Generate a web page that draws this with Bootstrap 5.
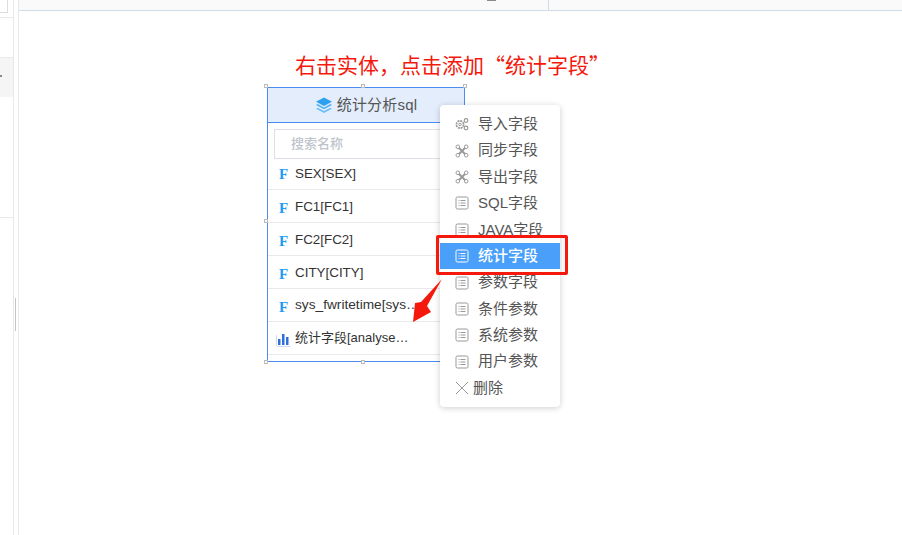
<!DOCTYPE html>
<html lang="zh-CN">
<head>
  <meta charset="UTF-8">
  <title>统计字段</title>
  <link href="https://cdn.jsdelivr.net/npm/bootstrap@5.3.0/dist/css/bootstrap.min.css" rel="stylesheet">
  <style>
    html, body { height: 100%; overflow: hidden; }
    body { font-family: "Liberation Sans", "Noto Sans CJK SC", sans-serif; font-size: 14px; color: #333; background: #fff; }
    .shell { height: 535px; }
    .side-pane { width: 14px; border-right: 1px solid #e8e8ec; position: relative; }
    .side-top { height: 18px; border-bottom: 1px solid #e8e8ec; }
    .side-top-box { height: 13px; width: 8px; background: #fff; border: 1px solid #ddd; border-width: 0 1px 1px 0; }
    .side-band { height: 40px; margin-top: 39px; background: #f5f5f5; border-top: 1px solid #ebebef; }
    .side-tick { position: absolute; left: 0; top: 75px; width: 2px; height: 2px; background: #888; }
    .side-line { height: 1px; background: #e8e8ec; margin-top: 120px; }
    .split-pane { width: 5px; border-right: 1px solid #e8e8ec; position: relative; }
    .split-grip { position: absolute; left: 1px; top: 298px; width: 1px; height: 33px; background: #c4c4c4; }
    .work-top { height: 11px; background: #fafafa; border-bottom: 1px solid #cfdbe6; position: relative; }
    .work-tab { width: 530px; border-right: 1px solid #cfdbe6; }
    .work-mark { position: absolute; left: 468px; top: 0; width: 9px; height: 1px; background: #8a8a8a; }
    .note-text { position: absolute; left: 295px; top: 50px; font-family: "Noto Sans CJK SC", sans-serif; font-size: 21px; font-weight: 400; line-height: 28px; color: #f5180c; white-space: nowrap; }
    .entity { position: absolute; left: 267px; top: 87px; width: 198px; height: 275px; border: 1px solid #4a8cf0; background: #fff; }
    .entity-head { height: 35px; background: #e3edfc; border-bottom: 1px solid #4a8cf0; font-size: 15px; color: #555; padding-top: 1px; letter-spacing: .2px; }
    .entity-search { margin: 6px 0 0 6px; height: 30px; width: 190px; border: 1px solid #dcdfe6; padding-left: 16px; color: #c0c4cc; font-size: 13px; line-height: 28px; font-weight: 500; }
    .field-row { height: 33px; border-bottom: 1px solid #e9e9ec; position: relative; padding-left: 27px; font-size: 13.4px; line-height: 34px; white-space: nowrap; color: #333; }
    .field-row.first-row { height: 31px; line-height: 29px; }
    .field-row.wide-row { font-size: 13.7px; line-height: 32px; }
    .field-row.cn-row { font-size: 13px; line-height: 32px; }
    .field-f { position: absolute; left: 11px; top: 10px; font-family: "Liberation Serif", serif; font-weight: 700; font-size: 15px; line-height: 16px; color: #1f9bf5; }
    .first-row .field-f { top: 7px; }
    .field-chart { position: absolute; left: 8px; top: 10px; }
    .grab { position: absolute; width: 4px; height: 4px; background: #fff; border: 1px solid #bbb; }
    .ctx-menu { position: absolute; left: 440px; top: 105px; width: 120px; height: 302px; background: #fff; border-radius: 4px; box-shadow: 0 1px 6px rgba(0, 0, 0, .2); padding-top: 6px; }
    .ctx-item { height: 26.4px; display: flex; align-items: center; padding-left: 15px; gap: 9px; color: #555; font-size: 15px; white-space: nowrap; }
    .ctx-item svg { flex: none; color: #999; }
    .ctx-item.ctx-on { background: #4a9ffb; color: #fff; font-weight: 500; }
    .ctx-item.ctx-on svg { color: #fff; }
    .ctx-item.ctx-del { gap: 4px; }
    .red-frame { position: absolute; left: 436px; top: 235px; width: 132px; height: 40px; border: 3px solid #f5180c; border-radius: 2px; }
    .red-arrow { position: absolute; left: 408px; top: 276px; }
  </style>
</head>
<body>
  <svg width="0" height="0" class="position-absolute">
    <defs>
      <symbol id="ico-list" viewBox="0 0 14 14">
        <rect x="1" y="1" width="12" height="12" rx="1.5" fill="none" stroke="currentColor"/>
        <path d="M3.5 4.5h1M3.5 7h1M3.5 9.5h1M5.5 4.5h5M5.5 7h5M5.5 9.5h5" stroke="currentColor" fill="none"/>
      </symbol>
      <symbol id="ico-tools" viewBox="0 0 14 14">
        <path d="M3 3l8.5 8.5M11 3L2.5 11.5" stroke="currentColor" stroke-width="2" fill="none"/>
        <circle cx="2.8" cy="2.8" r="1.8" fill="#fff" stroke="currentColor"/>
        <circle cx="11.2" cy="2.8" r="1.8" fill="#fff" stroke="currentColor"/>
        <circle cx="2.8" cy="11.2" r="1.8" fill="#fff" stroke="currentColor"/>
        <circle cx="11.2" cy="11.2" r="1.8" fill="#fff" stroke="currentColor"/>
      </symbol>
      <symbol id="ico-gears" viewBox="0 0 14 14">
        <circle cx="5" cy="7.5" r="3.6" fill="none" stroke="currentColor" stroke-width="1.8" stroke-dasharray="2 .8"/>
        <circle cx="5" cy="7.5" r="1.2" fill="none" stroke="currentColor"/>
        <circle cx="11" cy="3.5" r="1.8" fill="none" stroke="currentColor" stroke-width="1.2"/>
        <circle cx="11" cy="11" r="1.8" fill="none" stroke="currentColor" stroke-width="1.2"/>
      </symbol>
    </defs>
  </svg>

  <div class="shell d-flex">
    <div class="side-pane flex-shrink-0">
      <div class="side-top"><div class="side-top-box"></div></div>
      <div class="side-band"></div>
      <div class="side-tick"></div>
      <div class="side-line"></div>
    </div>
    <div class="split-pane flex-shrink-0"><div class="split-grip"></div></div>
    <div class="flex-grow-1">
      <div class="work-top d-flex"><div class="work-tab"></div><div class="work-mark"></div></div>
    </div>
  </div>

  <div class="note-text">右击实体，点击添加“统计字段”</div>

  <div class="entity">
    <div class="entity-head d-flex align-items-center justify-content-center gap-1">
      <svg width="18" height="18" viewBox="0 0 17 17">
        <path d="M8.5 0.5l7.5 4-7.5 4-7.5-4z" fill="#2ba0f0"/>
        <path d="M1 7.5l1.6-.8 5.9 3.1 5.9-3.1 1.6.8-7.5 4z" fill="#4db1f4"/>
        <path d="M1 11l1.6-.8 5.9 3.1 5.9-3.1 1.6.8-7.5 4z" fill="#6cc0f6"/>
      </svg>
      <span>统计分析sql</span>
    </div>
    <div class="entity-search">搜索名称</div>
    <div class="field-row first-row"><span class="field-f">F</span>SEX[SEX]</div>
    <div class="field-row"><span class="field-f">F</span>FC1[FC1]</div>
    <div class="field-row"><span class="field-f">F</span>FC2[FC2]</div>
    <div class="field-row"><span class="field-f">F</span>CITY[CITY]</div>
    <div class="field-row wide-row"><span class="field-f">F</span>sys_fwritetime[sys…</div>
    <div class="field-row cn-row">
      <svg class="field-chart" width="15" height="15" viewBox="0 0 15 15">
        <path d="M.5 3v9.5a2 2 0 0 0 2 2h12" fill="none" stroke="#c9dcf7"/>
        <path d="M2 7h2.5v6H2zM6 2h2.5v11H6zM10 5h2.5v8H10z" fill="#2f6fdc"/>
      </svg>
      统计字段[analyse…
    </div>
  </div>

  <span class="grab" style="left:264px;top:84px"></span>
  <span class="grab" style="left:361px;top:84px"></span>
  <span class="grab" style="left:463px;top:84px"></span>
  <span class="grab" style="left:264px;top:219px"></span>
  <span class="grab" style="left:264px;top:360px"></span>
  <span class="grab" style="left:361px;top:360px"></span>
  <span class="grab" style="left:463px;top:360px"></span>

  <div class="ctx-menu">
    <div class="ctx-item"><svg width="14" height="14"><use href="#ico-gears"/></svg><span>导入字段</span></div>
    <div class="ctx-item"><svg width="14" height="14"><use href="#ico-tools"/></svg><span>同步字段</span></div>
    <div class="ctx-item"><svg width="14" height="14"><use href="#ico-tools"/></svg><span>导出字段</span></div>
    <div class="ctx-item"><svg width="14" height="14"><use href="#ico-list"/></svg><span>SQL字段</span></div>
    <div class="ctx-item"><svg width="14" height="14"><use href="#ico-list"/></svg><span>JAVA字段</span></div>
    <div class="ctx-item ctx-on"><svg width="14" height="14"><use href="#ico-list"/></svg><span>统计字段</span></div>
    <div class="ctx-item"><svg width="14" height="14"><use href="#ico-list"/></svg><span>参数字段</span></div>
    <div class="ctx-item"><svg width="14" height="14"><use href="#ico-list"/></svg><span>条件参数</span></div>
    <div class="ctx-item"><svg width="14" height="14"><use href="#ico-list"/></svg><span>系统参数</span></div>
    <div class="ctx-item"><svg width="14" height="14"><use href="#ico-list"/></svg><span>用户参数</span></div>
    <div class="ctx-item ctx-del">
      <svg width="14" height="14" viewBox="0 0 14 14"><path d="M1 1l12 12M13 1L1 13" stroke="currentColor" fill="none"/></svg>
      <span>删除</span>
    </div>
  </div>

  <div class="red-frame"></div>
  <svg class="red-arrow" width="40" height="52" viewBox="0 0 40 52">
    <path d="M34 3L19 30l4 6L5 46l2-19 6-1z" fill="#f5180c"/>
  </svg>

  <script src="https://cdn.jsdelivr.net/npm/bootstrap@5.3.0/dist/js/bootstrap.bundle.min.js"></script>
</body>
</html>
